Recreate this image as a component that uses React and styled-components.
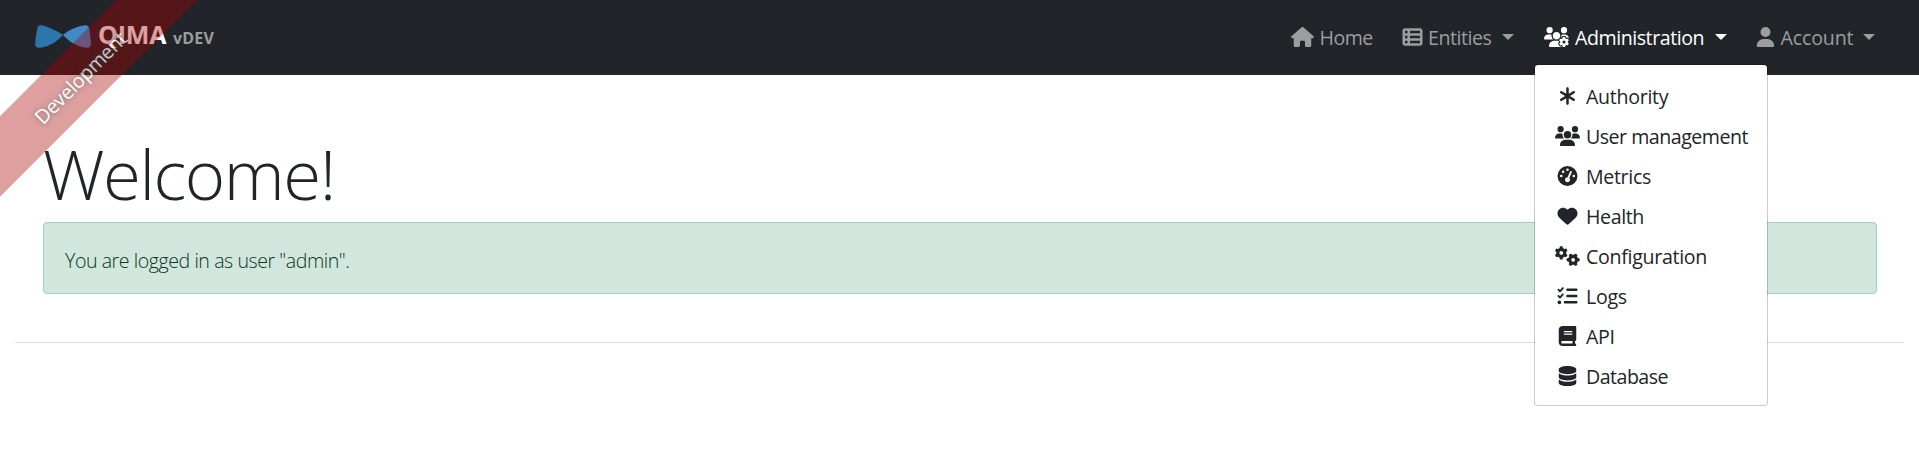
import React from "react";
import styled, { createGlobalStyle } from "styled-components";
import {
  FaHouse, FaTableList, FaUsersGear, FaUser, FaAsterisk, FaUsers,
  FaGaugeHigh, FaHeart, FaGears, FaListCheck, FaBook, FaDatabase,
} from "react-icons/fa6";

const Global = createGlobalStyle`
  *, *::before, *::after { box-sizing: border-box; }
  body {
    margin: 0;
    overflow: hidden;
    background: #fff;
    color: #212529;
    font-family: "Segoe UI", "Open Sans", "Noto Sans", sans-serif;
    font-size: 19.6px;
    line-height: 30px;
  }
`;

const Page = styled.div`
  position: relative;
  height: 471px;
  overflow: hidden;
`;

const Navbar = styled.nav`
  display: flex;
  justify-content: space-between;
  height: 75px;
  padding: 0 44px 0 35px;
  background: #212529;
`;

const Brand = styled.a`
  display: flex;
  align-items: flex-start;
  color: #fff;
  svg { margin-top: 25px; display: block; }
`;

const BrandName = styled.span`
  width: 75px;
  margin-left: 7px;
  padding-top: 19px;
  font-size: 25px;
  font-weight: 700;
  letter-spacing: ${(p) => p.$ls}px;
`;

const Version = styled.span`
  padding-top: 23px;
  font-size: 16px;
  font-weight: 700;
  letter-spacing: ${(p) => p.$ls}px;
  color: #9c9c9c;
`;

const NavList = styled.ul`
  display: flex;
  gap: 30px;
  margin: 0;
  padding: 0;
  list-style: none;
`;

const NavItem = styled.li`
  position: relative;
  display: flex;
  align-items: flex-start;
  color: ${(p) => (p.$active ? "#fff" : "#9b9d9e")};
`;

const IconBox = styled.span`
  flex: none;
  display: flex;
  justify-content: center;
  width: ${(p) => p.$w}px;
  height: 20px;
  margin-top: ${(p) => p.$top || 0}px;
  svg { flex: none; display: block; width: 25px; height: 20px; }
`;

const NavLabel = styled.span`
  width: ${(p) => p.$w}px;
  margin-left: 6px;
  padding-top: 23px;
  white-space: nowrap;
  letter-spacing: ${(p) => p.$ls}px;
`;

const Caret = styled.span`
  margin-top: 34px;
  border-top: 6px solid currentColor;
  border-left: 6px solid transparent;
  border-right: 6px solid transparent;
`;

const Menu = styled.div`
  position: absolute;
  z-index: 5;
  top: 64px;
  left: -10px;
  width: 234px;
  padding: 11px 0 9px;
  border: 1px solid rgba(0, 0, 0, 0.2);
  border-radius: 4px;
  background: #fff;
  background-clip: padding-box;
  color: #212529;
`;

const MenuItem = styled.div`
  display: flex;
  align-items: center;
  height: 40px;
  padding: 0 20px;
`;

const MenuLabel = styled.span`
  margin-left: 6px;
  padding-top: 2px;
  white-space: nowrap;
  letter-spacing: ${(p) => p.$ls}px;
`;

const Ribbon = styled.div`
  position: absolute;
  z-index: 10;
  top: 49px;
  left: -121px;
  width: 400px;
  height: 57px;
  line-height: 59px;
  text-align: center;
  text-indent: 2px;
  color: #fff;
  background: rgba(170, 0, 0, 0.5);
  opacity: 0.75;
  text-shadow: 0 0 5px #444;
  letter-spacing: -0.2px;
  transform: rotate(-45deg);
`;

const Content = styled.main`
  padding: 0 42px 0 43px;
`;

const Title = styled.h1`
  margin: 0;
  padding-top: 56px;
  height: 147px;
  font-size: 69px;
  font-weight: 300;
  line-height: 84px;
  letter-spacing: ${(p) => p.$ls}px;
`;

const Alert = styled.div`
  height: 72px;
  padding: 23px 21px 0;
  border: 1px solid #a3cfbb;
  border-radius: 4px;
  background: #d1e7dd;
  color: #0a3622;
  font-weight: 300;
  line-height: 30px;
  letter-spacing: ${(p) => p.$ls}px;
`;

const Rule = styled.hr`
  height: 1px;
  margin: 48px 15px 0;
  border: 0;
  background: #dcddde;
`;

const BowTie = () => (
  <svg width="56" height="23" viewBox="0 0 56 23">
    <path d="M28 9.700C20 5 12 1.300 6.500.3 4.500 0 3 .6 2.600 2.600 1.500 7.500.6 13.500.2 18.500 0 21.500 1.500 23 5 22.700 12.500 22 22 17 28 9.700Z" fill="#2d76ab" />
    <path d="M28 9.700C34 5 43 1 50 .3 52.500.1 53.500 1 54 3 55 8 55.700 13.500 55.900 18.500 56 21.500 54.500 23 51 22.700 43.500 22 34 17 28 9.700Z" fill="#4189c7" />
  </svg>
);

const menu = [
  ["Authority", FaAsterisk, -0.3],
  ["User management", FaUsers, -0.5],
  ["Metrics", FaGaugeHigh, -0.33],
  ["Health", FaHeart, -0.4],
  ["Configuration", FaGears, -0.3],
  ["Logs", FaListCheck, -0.3],
  ["API", FaBook, -0.3],
  ["Database", FaDatabase, -0.52],
];

export default function App() {
  return (
    <Page>
      <Global />
      <Ribbon>Development</Ribbon>
      <Navbar>
        <Brand>
          <BowTie />
          <BrandName $ls={-0.2}>QIMA</BrandName>
          <Version $ls={0.2}>vDEV</Version>
        </Brand>
        <NavList>
          <NavItem>
            <IconBox $w={22.5} $top={27}><FaHouse /></IconBox>
            <NavLabel $w={52.5} $ls={-0.5}>Home</NavLabel>
          </NavItem>
          <NavItem>
            <IconBox $w={20} $top={27}><FaTableList /></IconBox>
            <NavLabel $w={74} $ls={-0.45}>Entities</NavLabel>
            <Caret />
          </NavItem>
          <NavItem $active>
            <IconBox $w={25} $top={27}><FaUsersGear /></IconBox>
            <NavLabel $w={140} $ls={-0.45}>Administration</NavLabel>
            <Caret />
            <Menu>
              {menu.map(([label, Icon, ls]) => (
                <MenuItem key={label}>
                  <IconBox $w={25}><Icon /></IconBox>
                  <MenuLabel $ls={ls}>{label}</MenuLabel>
                </MenuItem>
              ))}
            </Menu>
          </NavItem>
          <NavItem>
            <IconBox $w={17.5} $top={27}><FaUser /></IconBox>
            <NavLabel $w={82.5} $ls={-0.15}>Account</NavLabel>
            <Caret />
          </NavItem>
        </NavList>
      </Navbar>
      <Content>
        <Title $ls={-1.5}>Welcome!</Title>
        <Alert $ls={-0.45}>You are logged in as user "admin".</Alert>
      </Content>
      <Rule />
    </Page>
  );
}
